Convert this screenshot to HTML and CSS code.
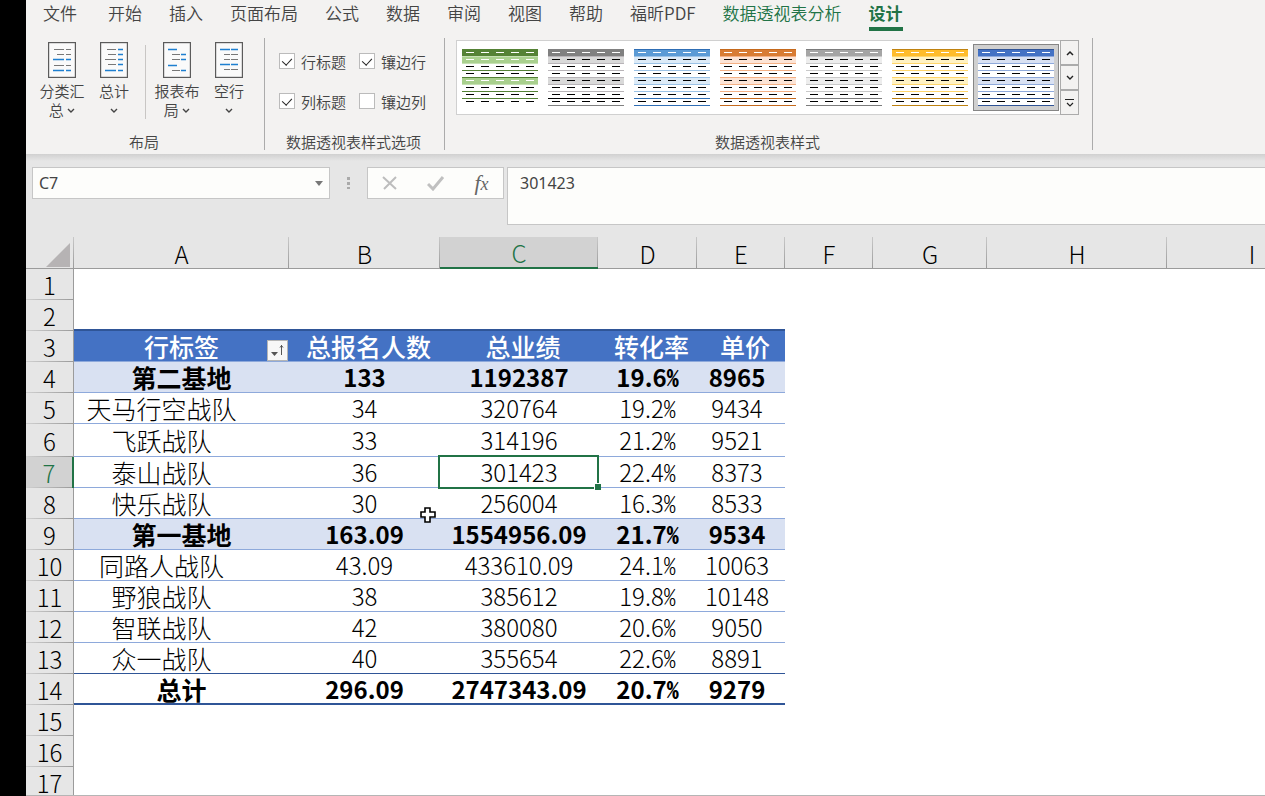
FILE: index.html
```html
<!DOCTYPE html>
<html lang="zh-CN">
<head>
    <meta charset="UTF-8">
    <meta name="viewport" content="width=device-width, initial-scale=1.0">
    <title>数据透视表</title>
    <link rel="stylesheet" href="styles.css">
</head>
<body>
    <svg class="defs" width="0" height="0">
        <symbol id="thumb" viewBox="0 0 76 57">
            <rect class="t-body" width="76" height="57"/>
            <rect class="t-head" width="76" height="7"/>
            <path class="t-band" d="M0 8h76v6H0zM0 29h76v6H0z"/>
            <path class="t-line" d="M0 21h76v1H0zM0 42h76v1H0zM0 28h76v1H0z"/>
            <path class="t-edge" d="M0 7h76v1H0zM0 14h76v1H0zM0 35h76v1H0z"/>
            <path class="t-top" d="M0 0h76v1H0z"/>
            <path class="t-total" d="M0 49h76v1H0z"/>
            <path class="t-bottom" d="M0 56h76v1H0z"/>
            <path class="t-dash-head" d="M4 3.5H76" stroke-dasharray="8 7"/>
            <path class="t-dash-band" d="M4 10.5H76M4 31.5H76" stroke-dasharray="8 7"/>
            <path class="t-dash" d="M4 17.5H76M4 24.5H76M4 38.5H76M4 45.5H76M4 52.5H76" stroke-dasharray="8 7"/>
        </symbol>
        <symbol id="chevron" viewBox="0 0 8 6">
            <path d="M1 1l3 3 3-3" fill="none" stroke="currentColor" stroke-width="1.4"/>
        </symbol>
    </svg>

    <nav class="tabs">
        <a href="#" class="file">文件</a>
        <a href="#">开始</a>
        <a href="#">插入</a>
        <a href="#">页面布局</a>
        <a href="#">公式</a>
        <a href="#">数据</a>
        <a href="#">审阅</a>
        <a href="#">视图</a>
        <a href="#">帮助</a>
        <a href="#">福昕PDF</a>
        <a href="#" class="context">数据透视表分析</a>
        <a href="#" class="context active">设计</a>
    </nav>

    <div class="ribbon">
        <section class="group group-layout">
            <div class="group-body">
                <button class="big-button">
                    <svg class="big-icon" width="28" height="36" viewBox="0 0 28 36">
                        <rect x=".5" y=".5" width="27" height="35" fill="#fafafa" stroke="#5b5b5b" stroke-width="1.4"/>
                        <path d="M6 7.5h10M18 7.5h5M9 12.5h7M18 12.5h5M6 23.5h10M18 23.5h5" stroke="#777"/>
                        <path d="M5 17.5h11M18 17.5h5M5 28.5h11M18 28.5h5" stroke="#1e7fd0" stroke-width="1.4"/>
                    </svg>
                    <span>分类汇<br>总 <svg class="caret" width="8" height="6"><use href="#chevron"/></svg></span>
                </button>
                <button class="big-button">
                    <svg class="big-icon" width="28" height="36" viewBox="0 0 28 36">
                        <rect x=".5" y=".5" width="27" height="35" fill="#fafafa" stroke="#5b5b5b" stroke-width="1.4"/>
                        <path d="M7 7.5h9M8 12.5h8M5 17.5h11M8 22.5h8" stroke="#777"/>
                        <path d="M18 7.5h5M18 12.5h5M18 17.5h5M18 22.5h5M5 28.5h11M18 28.5h5" stroke="#1e7fd0" stroke-width="1.4"/>
                    </svg>
                    <span>总计<br><svg class="caret" width="8" height="6"><use href="#chevron"/></svg></span>
                </button>
                <span class="split"></span>
                <button class="big-button">
                    <svg class="big-icon" width="28" height="36" viewBox="0 0 28 36">
                        <rect x=".5" y=".5" width="27" height="35" fill="#fafafa" stroke="#5b5b5b" stroke-width="1.4"/>
                        <path d="M9 12.5h8M9 17.5h8M9 28.5h8" stroke="#777"/>
                        <path d="M5 7.5h9M18 12.5h5M18 17.5h5M5 23.5h9M18 28.5h5" stroke="#1e7fd0" stroke-width="1.4"/>
                    </svg>
                    <span>报表布<br>局 <svg class="caret" width="8" height="6"><use href="#chevron"/></svg></span>
                </button>
                <button class="big-button">
                    <svg class="big-icon" width="28" height="36" viewBox="0 0 28 36">
                        <rect x=".5" y=".5" width="27" height="35" fill="#fafafa" stroke="#5b5b5b" stroke-width="1.4"/>
                        <path d="M9 12.5h6M16 12.5h7M9 17.5h6M16 17.5h7M9 27.5h6M16 27.5h7" stroke="#777"/>
                        <path d="M5 7.5h10M16 7.5h7M5 22.5h10M16 22.5h7" stroke="#1e7fd0" stroke-width="1.4"/>
                    </svg>
                    <span>空行<br><svg class="caret" width="8" height="6"><use href="#chevron"/></svg></span>
                </button>
            </div>
            <h2>布局</h2>
        </section>

        <section class="group group-options">
            <div class="group-body">
                <label><input type="checkbox" checked>行标题</label>
                <label><input type="checkbox" checked>镶边行</label>
                <label><input type="checkbox" checked>列标题</label>
                <label><input type="checkbox">镶边列</label>
            </div>
            <h2>数据透视表样式选项</h2>
        </section>

        <section class="group group-styles">
            <div class="group-body">
                <div class="gallery">
                    <button class="style-item green" aria-label="绿色"><svg width="76" height="57"><use href="#thumb"/></svg></button>
                    <button class="style-item black" aria-label="黑色"><svg width="76" height="57"><use href="#thumb"/></svg></button>
                    <button class="style-item sky" aria-label="浅蓝"><svg width="76" height="57"><use href="#thumb"/></svg></button>
                    <button class="style-item orange" aria-label="橙色"><svg width="76" height="57"><use href="#thumb"/></svg></button>
                    <button class="style-item gray" aria-label="灰色"><svg width="76" height="57"><use href="#thumb"/></svg></button>
                    <button class="style-item gold" aria-label="金色"><svg width="76" height="57"><use href="#thumb"/></svg></button>
                    <button class="style-item blue selected" aria-label="蓝色"><svg width="76" height="57"><use href="#thumb"/></svg></button>
                </div>
                <div class="gallery-nav">
                    <button aria-label="上一行"><svg width="8" height="6" viewBox="0 0 8 6"><path d="M1 5l3-3 3 3" fill="none" stroke="currentColor" stroke-width="1.5"/></svg></button>
                    <button aria-label="下一行"><svg width="8" height="6"><use href="#chevron"/></svg></button>
                    <button aria-label="其他"><svg width="10" height="10" viewBox="0 0 10 10"><path d="M0 1.5h9M2 5l3 3 3-3" fill="none" stroke="currentColor" stroke-width="1.2"/></svg></button>
                </div>
            </div>
            <h2>数据透视表样式</h2>
        </section>
    </div>

    <div class="formula-bar">
        <div class="name-box">
            <input type="text" value="C7" aria-label="名称框">
            <button aria-label="展开名称框"><svg width="8" height="5" viewBox="0 0 8 5"><path d="M0 0h8L4 5z" fill="#777"/></svg></button>
        </div>
        <svg class="grip" width="4" height="12" viewBox="0 0 4 12"><path d="M0 0h3v3H0zM0 5h3v3H0zM0 10h3v2H0z" fill="#aaa"/></svg>
        <div class="fx-box">
            <button aria-label="取消"><svg width="16" height="16" viewBox="0 0 16 16"><path d="M1 2l13 12M14 2L2 14" fill="none" stroke="#bdbdbd" stroke-width="2"/></svg></button>
            <button aria-label="输入"><svg width="18" height="16" viewBox="0 0 18 16"><path d="M1 9l5 5L16 2" fill="none" stroke="#c0c0c0" stroke-width="3"/></svg></button>
            <button class="fx" aria-label="插入函数">f<small>x</small></button>
        </div>
        <textarea class="formula" aria-label="编辑栏">301423</textarea>
    </div>

    <main class="sheet">
        <table>
            <colgroup>
                <col class="col-head"><col class="col-a"><col class="col-b"><col class="col-c"><col class="col-d"><col class="col-e"><col class="col-f"><col class="col-g"><col class="col-h"><col class="col-i">
            </colgroup>
            <thead>
                <tr>
                    <th class="corner"><svg width="24" height="24" viewBox="0 0 24 24"><path d="M24 0v24H0z" fill="#b6b3b4"/></svg></th>
                    <th>A</th><th>B</th><th class="current">C</th><th>D</th><th>E</th><th>F</th><th>G</th><th>H</th><th>I</th>
                </tr>
            </thead>
            <tbody>
                <tr><th>1</th><td colspan="9"></td></tr>
                <tr class="before-pivot"><th>2</th><td colspan="5"></td><td class="off" colspan="4"></td></tr>
                <tr class="pivot title">
                    <th>3</th>
                    <td><span class="filter-cell">行标签<button class="filter" aria-label="筛选"><svg width="21" height="21" viewBox="0 0 21 21"><rect x=".5" y=".5" width="20" height="20" fill="#f7f7f7" stroke="#b5b5b5"/><path d="M4 12h7l-3.500 4z" fill="#555"/><path d="M14.500 15V5M13 7.500l1.500-2 1.500 2" fill="none" stroke="#555"/></svg></button></span></td>
                    <td>总报名人数</td><td>总业绩</td><td>转化率</td><td>单价</td><td class="off" colspan="4"></td>
                </tr>
                <tr class="pivot subtotal"><th>4</th><td>第二基地</td><td>133</td><td>1192387</td><td>19.6<span class="pct">%</span></td><td>8965</td><td class="off" colspan="4"></td></tr>
                <tr class="pivot"><th>5</th><td>天马行空战队</td><td>34</td><td>320764</td><td>19.2<span class="pct">%</span></td><td>9434</td><td class="off" colspan="4"></td></tr>
                <tr class="pivot tall"><th>6</th><td>飞跃战队</td><td>33</td><td>314196</td><td>21.2<span class="pct">%</span></td><td>9521</td><td class="off" colspan="4"></td></tr>
                <tr class="pivot"><th class="current">7</th><td>泰山战队</td><td>36</td><td class="selected-cell">301423</td><td>22.4<span class="pct">%</span></td><td>8373</td><td class="off" colspan="4"></td></tr>
                <tr class="pivot"><th>8</th><td>快乐战队</td><td>30</td><td>256004</td><td>16.3<span class="pct">%</span></td><td>8533</td><td class="off" colspan="4"></td></tr>
                <tr class="pivot subtotal"><th>9</th><td>第一基地</td><td>163.09</td><td>1554956.09</td><td>21.7<span class="pct">%</span></td><td>9534</td><td class="off" colspan="4"></td></tr>
                <tr class="pivot"><th>10</th><td>同路人战队</td><td>43.09</td><td>433610.09</td><td>24.1<span class="pct">%</span></td><td>10063</td><td class="off" colspan="4"></td></tr>
                <tr class="pivot"><th>11</th><td>野狼战队</td><td>38</td><td>385612</td><td>19.8<span class="pct">%</span></td><td>10148</td><td class="off" colspan="4"></td></tr>
                <tr class="pivot"><th>12</th><td>智联战队</td><td>42</td><td>380080</td><td>20.6<span class="pct">%</span></td><td>9050</td><td class="off" colspan="4"></td></tr>
                <tr class="pivot last"><th>13</th><td>众一战队</td><td>40</td><td>355654</td><td>22.6<span class="pct">%</span></td><td>8891</td><td class="off" colspan="4"></td></tr>
                <tr class="pivot total"><th>14</th><td>总计</td><td>296.09</td><td>2747343.09</td><td>20.7<span class="pct">%</span></td><td>9279</td><td class="off" colspan="4"></td></tr>
                <tr><th>15</th><td colspan="9"></td></tr>
                <tr><th>16</th><td colspan="9"></td></tr>
                <tr><th>17</th><td colspan="9"></td></tr>
            </tbody>
        </table>
        <svg class="pointer" width="16" height="16" viewBox="0 0 16 16"><path d="M5 1h5v4h5v5h-5v5H5v-5H1V5h4z" fill="#fff" stroke="#000" stroke-width="1.6"/></svg>
    </main>
</body>
</html>
```
FILE: styles.css
```css
:root {
    --ribbon: #f3f2f1;
    --chrome: #e6e6e6;
    --green: #217346;
    --text: #444;
    --line: #ababab;
    --pivot: #4472c4;
    --pivot-dark: #2f5597;
    --pivot-line: #8ea9db;
    --pivot-band: #d9e1f2;
}

* {
    box-sizing: border-box;
}

body {
    margin: 0;
    height: 100vh;
    border-left: 26px solid #000;
    display: flex;
    flex-direction: column;
    overflow: hidden;
    background: #fff;
    color: var(--text);
    font-family: "Noto Sans CJK SC", sans-serif;
    font-size: 15px;
    font-weight: 350;
}

button {
    font: inherit;
    color: inherit;
    background: none;
    border: 0;
    padding: 0;
}

.defs {
    position: absolute;
}

/* Tabs */
.tabs {
    display: flex;
    gap: 27px;
    height: 38px;
    padding-left: 17px;
    background: var(--ribbon);
    font-size: 17px;
    line-height: 26px;
    white-space: nowrap;
}

.tabs a {
    color: var(--text);
    text-decoration: none;
    height: 31px;
}

.tabs .file {
    margin-right: 4px;
}

.tabs .context {
    color: var(--green);
}

.tabs .active {
    font-weight: 700;
    border-bottom: 4px solid var(--green);
}

/* Ribbon */
.ribbon {
    display: flex;
    height: 116px;
    background: var(--ribbon);
    flex-shrink: 0;
}

.group {
    display: flex;
    flex-direction: column;
    height: 112px;
    border-right: 1px solid var(--line);
}

.group h2 {
    margin: auto 0 0;
    padding-right: 2px;
    font-size: 15px;
    font-weight: 350;
    line-height: 16px;
    text-align: center;
}

.group-layout {
    width: 239px;
}

.group-layout .group-body {
    display: flex;
    padding: 4px 0 0 10px;
}

.big-button {
    width: 52px;
    display: flex;
    flex-direction: column;
    align-items: center;
    gap: 3px;
    line-height: 19px;
    white-space: nowrap;
}

.caret {
    vertical-align: 2px;
}

.split {
    width: 1px;
    height: 74px;
    margin: 3px 5px 0;
    background: #c8c6c4;
}

.group-options {
    width: 180px;
}

.group-options .group-body {
    display: grid;
    grid-template-columns: 80px 80px;
    grid-template-rows: 40px 40px;
    padding: 3px 0 0 14px;
}

.group-options label {
    display: flex;
    align-items: center;
    gap: 6px;
    white-space: nowrap;
}

.group-options input {
    appearance: none;
    display: flex;
    justify-content: center;
    width: 16px;
    height: 16px;
    margin: 0;
    border: 1px solid #bbb;
    background: #fff;
}

.group-options input:checked::before {
    content: "";
    width: 5px;
    height: 8px;
    margin-top: 2px;
    border: solid #222;
    border-width: 0 1px 1px 0;
    transform: rotate(42deg);
}

.group-styles {
    width: 648px;
}

.group-styles .group-body {
    display: flex;
    padding: 2px 0 0 11px;
}

.gallery {
    display: flex;
    height: 75px;
    padding: 3px 1px 0 0;
    border: 1px solid #d0d0d0;
    border-right: 0;
    background: #fff;
}

.style-item {
    width: 86px;
    height: 67px;
    display: flex;
    align-items: center;
    justify-content: center;
    border: 1px solid transparent;
}

.style-item.selected {
    background: #d0d0d0;
    border-color: #868686;
}

.gallery-nav {
    display: flex;
    flex-direction: column;
    width: 19px;
    color: #222;
}

.gallery-nav button {
    flex: 1;
    display: flex;
    align-items: center;
    justify-content: center;
    border: 1px solid var(--line);
}

/* Gallery thumbnails */
.t-body { fill: #fff; }
.t-head { fill: var(--head); }
.t-band { fill: var(--band); }
.t-line { fill: var(--rule); }
.t-edge { fill: var(--edge, var(--rule)); }
.t-top { fill: var(--strong); }
.t-total { fill: var(--total, var(--strong)); }
.t-bottom { fill: var(--bottom, var(--strong)); }
.t-dash-head { stroke: #fff; }
.t-dash-band { stroke: var(--band-dash, #000); }
.t-dash { stroke: #000; }

.green { --head: #548235; --band: #a9d08e; --rule: #548235; --edge: #c6e0b4; --strong: #548235; --bottom: #fff; --band-dash: #fff; }
.black { --head: #808080; --band: #d9d9d9; --rule: #b8b4b8; --strong: #808080; --total: #000; }
.sky { --head: #5b9bd5; --band: #ddebf7; --rule: #9bc2e6; --strong: #2f6eb5; }
.orange { --head: #d87c34; --band: #fce4d6; --rule: #f4b084; --strong: #c5691c; }
.gray { --head: #a5a5a5; --band: #ededed; --rule: #c9c9c9; --strong: #7b7b7b; }
.gold { --head: #ffbc2b; --band: #fff2c4; --rule: #ffd569; --strong: #bf8210; }
.blue { --head: #4472c4; --band: #d9e1f2; --rule: #8ea9db; --strong: #305496; }

/* Formula bar */
.formula-bar {
    display: flex;
    align-items: flex-start;
    padding: 13px 0 12px 6px;
    background: linear-gradient(#d0d0d0, var(--chrome) 7px);
    flex-shrink: 0;
}

.name-box,
.fx-box {
    display: flex;
    align-items: center;
    height: 32px;
    border: 1px solid #c6c6c6;
    background: #fdfdfb;
}

.name-box {
    width: 298px;
    padding-right: 6px;
}

.name-box input,
.formula {
    flex: 1;
    min-width: 0;
    border: 0;
    outline: 0;
    background: none;
    color: var(--text);
    font-family: "Noto Sans", sans-serif;
    font-size: 16px;
}

.name-box input {
    padding: 0 6px;
}

.name-box button {
    display: flex;
}

.grip {
    margin: 10px 16px 0 17px;
}

.fx-box {
    width: 137px;
    justify-content: space-around;
    margin-right: 3px;
}

.fx-box button {
    display: flex;
}

.fx-box .fx {
    display: block;
    color: #666;
    font-family: "Liberation Serif", serif;
    font-size: 22px;
    font-style: italic;
    line-height: 24px;
}

.fx small {
    font-size: 18px;
}

.formula {
    height: 58px;
    padding: 4px 12px;
    border: 1px solid #c6c6c6;
    border-right: 0;
    background: #fdfdfb;
    line-height: 22px;
    resize: none;
}

/* Worksheet */
.sheet {
    position: relative;
    flex: 1;
    min-height: 0;
    overflow: hidden;
    border-bottom: 1px solid #b5b5b5;
}

table {
    width: 1311px;
    table-layout: fixed;
    border-collapse: separate;
    border-spacing: 0;
    color: #000;
    font-size: 24px;
    font-weight: 300;
    line-height: 24px;
    text-align: center;
}

.col-head { width: 48px; }
.col-a { width: 215px; }
.col-b { width: 151px; }
.col-c { width: 158px; }
.col-d { width: 99px; }
.col-e { width: 88px; }
.col-f { width: 88px; }
.col-g { width: 114px; }
.col-h { width: 180px; }
.col-i { width: 170px; }

th,
td {
    height: 31px;
    padding: 0;
    white-space: nowrap;
}

th {
    background: var(--chrome);
    font-weight: 300;
}

thead th {
    height: 32px;
    padding-top: 2px;
    border-bottom: 1px solid #9b9b9b;
    background: linear-gradient(#c8c8c8, #9b9b9b) right / 1px 100% no-repeat var(--chrome);
}

tbody th {
    border-right: 1px solid #9b9b9b;
    background: linear-gradient(to right, #d0d0d0, #9b9b9b) bottom / 100% 1px no-repeat var(--chrome);
}

thead .corner {
    padding: 4px 4px 0 0;
    text-align: right;
    line-height: 0;
}

th.current {
    background-color: #d2d2d2;
    color: var(--green);
}

thead .current {
    border-bottom: 2px solid var(--green);
}

tbody .current {
    border-right: 2px solid var(--green);
}

.before-pivot td:not(.off) {
    border-bottom: 2px solid var(--pivot-dark);
}

.pivot td:not(.off) {
    border-bottom: 1px solid var(--pivot-line);
}

.pivot td:nth-child(2) {
    padding-right: 40px;
    font-size: 25px;
}

.pivot td:nth-child(6) {
    padding-right: 8px;
}

.tall td,
.tall th {
    height: 33px;
}

.title td:not(.off) {
    padding: 0 0 0 8px;
    background: var(--pivot);
    color: #fff;
    font-size: 25px;
    font-weight: 500;
}

.title td:nth-child(2),
.subtotal td:nth-child(2),
.total td:nth-child(2) {
    padding-left: 0;
    padding-right: 0;
}

.subtotal td,
.total td {
    font-weight: 700;
}

.subtotal td:not(.off) {
    background: var(--pivot-band);
}

.last td:not(.off) {
    border-bottom-color: var(--pivot-dark);
}

.total td:not(.off) {
    border-bottom: 2px solid var(--pivot-dark);
}

/* half-width percent sign */
.pct {
    font-feature-settings: "hwid";
}

.filter-cell {
    display: block;
    position: relative;
}

.filter {
    position: absolute;
    right: 1px;
    bottom: -3px;
    display: flex;
}

.selected-cell {
    position: relative;
}

.selected-cell::before {
    content: "";
    position: absolute;
    inset: -2px -1px -2px -2px;
    border: 2px solid var(--green);
}

.selected-cell::after {
    content: "";
    position: absolute;
    right: -3px;
    bottom: -3px;
    width: 6px;
    height: 6px;
    background: var(--green);
    border: solid #fff;
    border-width: 1px 0 0 1px;
}

.pointer {
    position: absolute;
    left: 394px;
    top: 270px;
}
```
